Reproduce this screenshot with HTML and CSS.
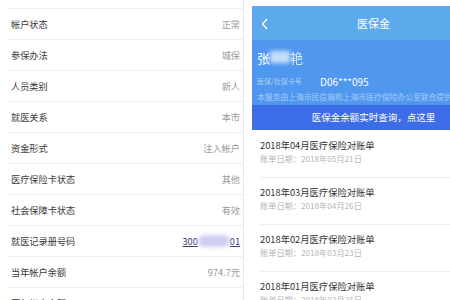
FILE: index.html
```html
<!DOCTYPE html>
<html lang="zh-CN">
<head>
    <meta charset="UTF-8">
    <meta name="viewport" content="width=device-width, initial-scale=1.0">
    <title>医保金</title>
    <link rel="stylesheet" href="styles.css">
</head>
<body>

    <div class="info-panel">
        <div class="row"><span class="label">帐户状态</span><span class="value">正常</span></div>
        <div class="row"><span class="label">参保办法</span><span class="value">城保</span></div>
        <div class="row"><span class="label">人员类别</span><span class="value">新人</span></div>
        <div class="row"><span class="label">就医关系</span><span class="value">本市</span></div>
        <div class="row"><span class="label">资金形式</span><span class="value">注入帐户</span></div>
        <div class="row"><span class="label">医疗保险卡状态</span><span class="value">其他</span></div>
        <div class="row"><span class="label">社会保障卡状态</span><span class="value">有效</span></div>
        <div class="row">
            <span class="label">就医记录册号码</span>
            <span class="value link">300<span class="mask"></span>01</span>
        </div>
        <div class="row"><span class="label">当年帐户余额</span><span class="value">974.7元</span></div>
        <div class="row"><span class="label">历年帐户余额</span><span class="value">3333.18元</span></div>
    </div>

    <div class="phone">
        <div class="topbar">
            <svg class="back" width="8" height="12" viewBox="0 0 8 12">
                <polyline points="6,1 1.5,6 6,11" fill="none" stroke="#fff" stroke-width="1.3"/>
            </svg>
            <div class="title">医保金</div>
        </div>

        <div class="user">
            <div class="name">张<span class="blur"></span><span class="last">艳</span></div>
            <div class="card-row">
                <span class="card-label">医保/社保卡号</span>
                <span class="card-no">D06***095</span>
            </div>
            <div class="note">本服务由上海市民信箱和上海市医疗保险办公室联合提供</div>
        </div>

        <div class="query-bar">医保金余额实时查询，点这里</div>

        <div class="bills">
            <div class="bill">
                <div class="bill-title">2018年04月医疗保险对账单</div>
                <div class="bill-date">账单日期：2018年05月21日</div>
            </div>
            <div class="bill">
                <div class="bill-title">2018年03月医疗保险对账单</div>
                <div class="bill-date">账单日期：2018年04月26日</div>
            </div>
            <div class="bill">
                <div class="bill-title">2018年02月医疗保险对账单</div>
                <div class="bill-date">账单日期：2018年03月23日</div>
            </div>
            <div class="bill">
                <div class="bill-title">2018年01月医疗保险对账单</div>
                <div class="bill-date">账单日期：2018年02月26日</div>
            </div>
            <div class="bill">
                <div class="bill-title">2017年12月医疗保险对账单</div>
                <div class="bill-date">账单日期：2018年01月24日</div>
            </div>
        </div>
    </div>

</body>
</html>
```

FILE: styles.css
```css
body {
    font-family: "Noto Sans CJK SC", "Noto Sans", sans-serif;
    margin: 0;
    height: 300px;
    overflow: hidden;
    display: flex;
    background-color: white;
}

/* left: account details */
.info-panel {
    width: 243px;
    flex-shrink: 0;
    padding-top: 8px;
    border-right: 1px solid #e8e8e8;
}

.row {
    display: flex;
    justify-content: space-between;
    align-items: center;
    height: 30px;
    margin-left: 8px;
    padding: 0 3px;
    border-top: 1px solid #eeeeee;
    font-size: 9.2px;
}

.label {
    color: #3a3a3a;
}

.value {
    color: #9a9a9a;
}

.value.link {
    display: flex;
    align-items: center;
    color: #3c3f6e;
    text-decoration: underline;
}

.mask {
    display: inline-block;
    width: 32px;
    height: 12px;
    background-color: #cfcdf3;
    border-radius: 6px;
    filter: blur(2px);
}

/* right: phone screen */
.phone {
    width: 243px;
    flex-shrink: 0;
    margin-left: 8px;
    padding-top: 6px;
}

.topbar {
    display: flex;
    align-items: center;
    justify-content: center;
    position: relative;
    height: 34px;
    background-color: #5caaec;
}

.back {
    position: absolute;
    left: 9px;
    top: 12px;
}

.title {
    color: white;
    font-size: 11px;
}

.user {
    height: 56px;
    padding: 9px 0 0 5px;
    background-color: #5098ef;
    overflow: hidden;
    white-space: nowrap;
}

.name {
    display: flex;
    align-items: center;
    height: 16px;
    color: white;
    font-size: 13px;
}

.blur {
    display: inline-block;
    width: 20px;
    height: 12px;
    background-color: rgba(230, 240, 255, 0.8);
    filter: blur(2px);
}

.last {
    opacity: 0.8;
}

.card-row {
    display: flex;
    align-items: center;
    height: 12px;
    margin-top: 10px;
}

.card-label {
    width: 63px;
    font-size: 7px;
    color: rgba(255, 255, 255, 0.55);
}

.card-no {
    font-size: 10px;
    color: white;
}

.note {
    margin-top: 5px;
    height: 10px;
    line-height: 10px;
    font-size: 7.8px;
    color: rgba(255, 255, 255, 0.5);
}

.query-bar {
    height: 25px;
    line-height: 25px;
    text-align: center;
    background-color: #3c6ce6;
    color: white;
    font-size: 9.5px;
}

.bills {
    padding-top: 1px;
}

.bill {
    height: 38px;
    margin-left: 8px;
    border-bottom: 1px solid #ededed;
}

.bill-title {
    margin-top: 8px;
    line-height: 12px;
    font-size: 9.3px;
    color: #333;
}

.bill-date {
    margin-top: 1px;
    line-height: 12px;
    font-size: 8.2px;
    color: #b5b5b5;
}
```
